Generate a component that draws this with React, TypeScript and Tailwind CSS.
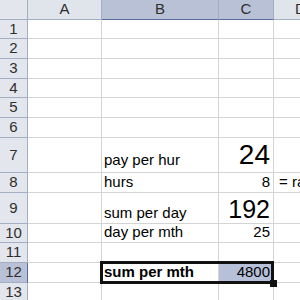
import React from "react";

type Row = {
  n: number;
  h: string;
  b?: string;
  c?: string;
  d?: string;
  big?: string;
  pb?: string;
  sel?: boolean;
};

const rows: Row[] = [
  { n: 1, h: "h-[19px]" },
  { n: 2, h: "h-[20px]" },
  { n: 3, h: "h-[20px]" },
  { n: 4, h: "h-[19px]" },
  { n: 5, h: "h-[20px]" },
  { n: 6, h: "h-[20px]" },
  { n: 7, h: "h-[35px]", b: "pay per hur", c: "24", big: "text-[28px]", pb: "pb-[4px]" },
  { n: 8, h: "h-[20px]", b: "hurs", c: "8", d: "= rate" },
  { n: 9, h: "h-[31px]", b: "sum per day", c: "192", big: "text-[25px]" },
  { n: 10, h: "h-[19px]", b: "day per mth", c: "25" },
  { n: 11, h: "h-[20px]" },
  { n: 12, h: "h-[20px]", b: "sum per mth", c: "4800", sel: true },
  { n: 13, h: "h-[20px]" },
];

const headCell = "flex items-center justify-center border-r border-b border-[#a3aec2] text-[15px] text-[#2e2e2e]";
const cell = "flex items-end border-r border-b border-[#d4d4d4] text-[15px] leading-[17px] text-black whitespace-nowrap overflow-hidden";

export default function App() {
  return (
    <div className="w-[300px] h-[300px] overflow-hidden bg-white font-['Liberation_Sans',Arial,sans-serif]">
      <div className="w-[400px]">
        {/* column headers */}
        <div className="flex h-[20px]">
          <div className={`${headCell} w-[28px] bg-[#e3e6ec]`} />
          <div className={`${headCell} w-[74px] bg-[#e0e4eb]`}>A</div>
          <div className={`${headCell} w-[117px] bg-[#b9c1d6] border-b-[#5a6a9e]`}>B</div>
          <div className={`${headCell} w-[55px] bg-[#b9c1d6] border-b-[#5a6a9e]`}>C</div>
          <div className={`${headCell} w-[54px] bg-[#e0e4eb]`}>D</div>
          <div className={`${headCell} w-[60px] bg-[#e0e4eb]`}>E</div>
        </div>

        {rows.map((r) => (
          <div key={r.n} className={`flex ${r.h}`}>
            <div
              className={`${headCell} w-[28px] ${r.sel ? "bg-[#b9c1d6] border-r-[#5a6a9e]" : "bg-[#e3e6ec]"} border-b-[#a3aec2]`}
            >
              {r.n}
            </div>
            <div className={`${cell} w-[74px]`} />
            <div className="relative flex">
              <div className={`${cell} w-[117px] pl-[2px] ${r.pb ?? "pb-[2px]"} ${r.sel ? "font-bold" : ""}`}>{r.b}</div>
              <div
                className={`${cell} w-[55px] justify-end pr-[3px] ${r.big ? `${r.big} leading-none pb-[1px]` : "pb-[2px]"} ${r.n === 7 ? "pb-[3px]" : ""} ${r.sel ? "bg-[#b7c0d9]" : ""}`}
              >
                {r.c}
              </div>
              {r.sel && (
                <div className="pointer-events-none absolute z-10 top-[-2px] left-[-2px] right-0 bottom-[-1px] border-[3px] border-[#111]">
                  <div className="absolute right-[-6px] bottom-[-6px] w-[7px] h-[7px] bg-[#111]" />
                </div>
              )}
            </div>
            <div className={`${cell} w-[54px] pl-[5px] pb-[2px]`}>{r.d}</div>
            <div className={`${cell} w-[60px]`} />
          </div>
        ))}
      </div>
    </div>
  );
}
